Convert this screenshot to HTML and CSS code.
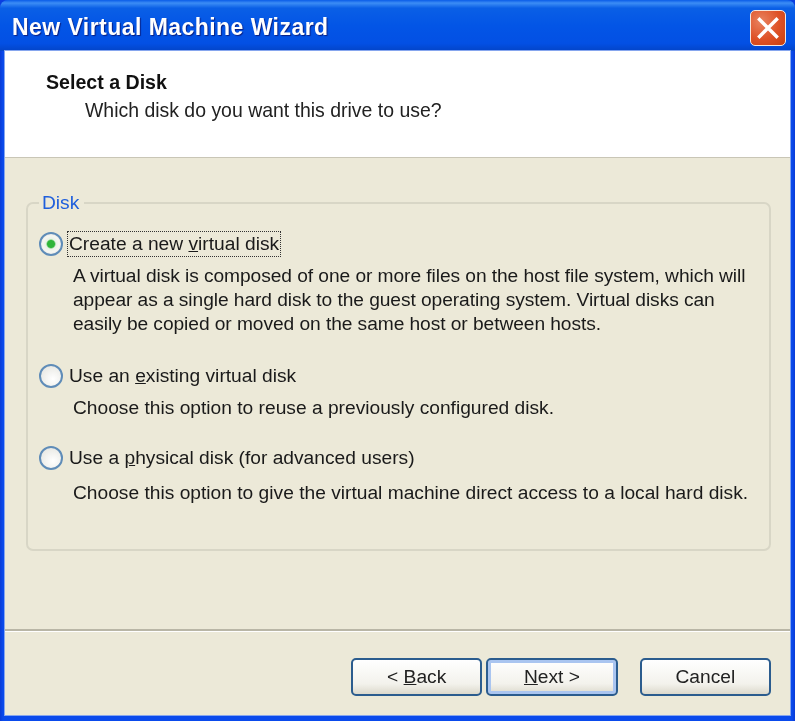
FILE: index.html
```html
<!DOCTYPE html>
<html lang="en">
<head>
<meta charset="utf-8">
<title>New Virtual Machine Wizard</title>
<link rel="stylesheet" href="styles.css">
</head>
<body>
<div class="window">
  <header class="titlebar">
    <span class="title">New Virtual Machine Wizard</span>
    <button class="close" aria-label="Close">
      <svg viewBox="0 0 28 28" width="28" height="28"><path d="M5.5 5.5L22.5 22.5M22.5 5.5L5.5 22.5" stroke="#fff" stroke-width="3.4" stroke-linecap="square" fill="none"/></svg>
    </button>
  </header>
  <div class="client">
    <section class="head">
      <h1>Select a Disk</h1>
      <p>Which disk do you want this drive to use?</p>
    </section>
    <main class="body">
      <fieldset class="group">
        <legend>Disk</legend>
        <div class="option">
          <div class="choice"><span class="radio checked"></span><span class="label focus">Create a new <u>v</u>irtual disk</span></div>
          <p class="desc tight">A virtual disk is composed of one or more files on the host file system, which will<br>appear as a single hard disk to the guest operating system. Virtual disks can<br>easily be copied or moved on the same host or between hosts.</p>
        </div>
        <div class="option second">
          <div class="choice"><span class="radio"></span><span class="label">Use an <u>e</u>xisting virtual disk</span></div>
          <p class="desc">Choose this option to reuse a previously configured disk.</p>
        </div>
        <div class="option">
          <div class="choice"><span class="radio"></span><span class="label">Use a <u>p</u>hysical disk (for advanced users)</span></div>
          <p class="desc last">Choose this option to give the virtual machine direct access to a local hard disk.</p>
        </div>
      </fieldset>
    </main>
    <footer class="foot">
      <button class="btn">&lt; <u>B</u>ack</button>
      <button class="btn default"><u>N</u>ext &gt;</button>
      <button class="btn cancel">Cancel</button>
    </footer>
  </div>
</div>
</body>
</html>
```
FILE: styles.css
```css
* { box-sizing: border-box; }
html, body { margin: 0; padding: 0; }
body { width: 795px; height: 721px; overflow: hidden; background: #0a3ee0; font-family: "Liberation Sans", Arial, sans-serif; font-size: 19.2px; color: #1a1a1a; }
.window { width: 795px; height: 721px; display: flex; flex-direction: column; background: linear-gradient(90deg, #0a3bd6 0, #0a4aec 3px, #0a4aec 792px, #0a3bd6 795px); border-radius: 8px 8px 0 0; overflow: hidden; filter: blur(0.4px); }
.titlebar { height: 51px; flex: none; display: flex; align-items: center; justify-content: space-between; padding: 4px 9px 0 12px; background: linear-gradient(180deg, #0a5ce8 0%, #3c8df5 6%, #0a5fe6 16%, #0355e6 50%, #0350e4 85%, #0344c8 100%); }
.title { font-weight: 700; font-size: 23px; color: #fff; text-shadow: 1px 1px 1px #0a1f80; letter-spacing: 0.45px; }
.close { width: 36px; height: 36px; padding: 0; display: flex; align-items: center; justify-content: center; border: 1.5px solid #f4e8e0; border-radius: 5px; background: radial-gradient(circle at 30% 30%, #e98360, #de5126 55%, #c93f0c); }
.client { flex: 1; margin: 0 5px 6px; display: flex; flex-direction: column; background: #ece9d8; min-height: 0; box-shadow: 0 0 0 1px #86a6ee; }
.head { height: 107px; flex: none; padding: 19px 0 0 41px; background: #fff; border-bottom: 1px solid #c9c6b6; }
.head h1 { margin: 0; font-size: 19.6px; line-height: 24px; font-weight: 700; color: #111; }
.head p { margin: 4px 0 0 39px; font-size: 19.45px; line-height: 24px; color: #222; }
.body { flex: 1; min-height: 0; padding: 33px 19px 0 21px; border-bottom: 2px solid #b9b6a6; box-shadow: 0 1px 0 #fff; }
.group { margin: 0; padding: 17px 14px 0 11px; height: 360px; border: 2px solid #d8d6c6; border-radius: 7px; }
.group legend { padding: 0 5px 0 3px; margin-left: 0; line-height: 24px; color: #1f5fdc; }
.option { margin-bottom: 28px; }
.option.second { margin-bottom: 26px; }
.choice { display: flex; align-items: center; gap: 5px; height: 24px; }
.radio { width: 24px; height: 24px; flex: none; border-radius: 50%; border: 2px solid #5f8cb8; background: radial-gradient(circle at 60% 65%, #fff, #e2e2dc); }
.radio.checked { background: radial-gradient(circle, #2fb53a 0 3.5px, #e8f2e6 5px, #f6f6f2 8px, #d6dad6); }
.label { padding: 0 1px; line-height: 24px; white-space: nowrap; }
.label.focus { outline: 1px dotted #333; outline-offset: 0; }
.desc { margin: 8px 0 0 34px; line-height: 24px; white-space: nowrap; }
.desc.tight { letter-spacing: -0.07px; }
.desc.last { margin-top: 11px; }
.foot { height: 84px; flex: none; display: flex; align-items: flex-start; padding: 27px 19px 0 346px; gap: 4px; }
.btn { width: 132px; height: 38px; padding: 0; font: inherit; color: #222; border: 2px solid #2b5c8e; border-radius: 5px; background: linear-gradient(180deg, #fff, #f3f2ec 70%, #dcd9cc); }
.btn.default { box-shadow: inset 0 0 0 3px #aac5f0; }
.btn.cancel { margin-left: 18px; }
```
